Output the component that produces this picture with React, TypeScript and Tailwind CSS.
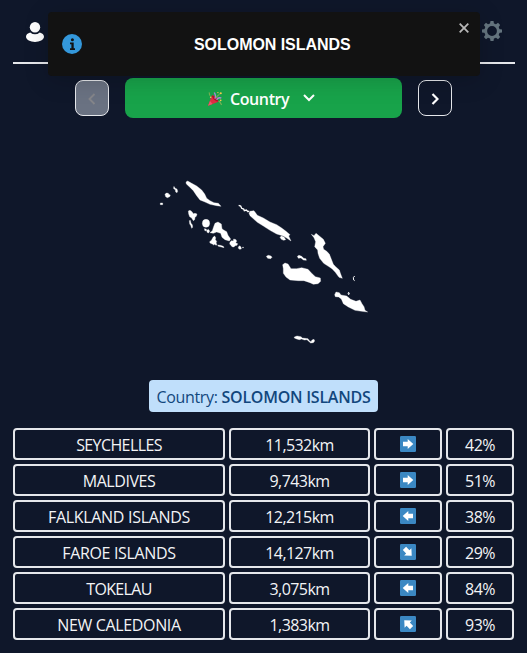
import React from "react";

type Direction = "right" | "left" | "downRight" | "upLeft";

interface Guess {
  name: string;
  distance: string;
  direction: Direction;
  proximity: string;
  spacing: string;
}

const guesses: Guess[] = [
  { name: "SEYCHELLES", distance: "11,532km", direction: "right", proximity: "42%", spacing: "tracking-[-0.6px]" },
  { name: "MALDIVES", distance: "9,743km", direction: "right", proximity: "51%", spacing: "tracking-[-0.45px]" },
  { name: "FALKLAND ISLANDS", distance: "12,215km", direction: "left", proximity: "38%", spacing: "tracking-[-0.3px]" },
  { name: "FAROE ISLANDS", distance: "14,127km", direction: "downRight", proximity: "29%", spacing: "tracking-[-0.33px]" },
  { name: "TOKELAU", distance: "3,075km", direction: "left", proximity: "84%", spacing: "tracking-[-0.65px]" },
  { name: "NEW CALEDONIA", distance: "1,383km", direction: "upLeft", proximity: "93%", spacing: "tracking-[-0.35px]" },
];

const angles: Record<Direction, number> = { right: 0, left: 180, downRight: 45, upLeft: 225 };

function ArrowTile({ direction }: { direction: Direction }) {
  return (
    <svg width="16" height="16" viewBox="0 0 16 16">
      <rect width="16" height="16" rx="1.2" fill="#3b88c3" />
      <path
        d="M3 5.7h4.7V2.9L13.3 8l-5.6 5.1v-2.8H3z"
        fill="#fff"
        transform={`rotate(${angles[direction]} 8 8)`}
      />
    </svg>
  );
}

function UserIcon() {
  return (
    <svg width="18" height="20" viewBox="0 0 18 20" fill="#fff" className="relative top-px">
      <circle cx="9" cy="5.2" r="5.2" />
      <path d="M4.2 10.4C1.7 11 0 12.6 0 14.8c0 3.1 4.5 5.2 9 5.2s9-2.1 9-5.2c0-2.2-1.7-3.8-4.2-4.4a7.7 7.7 0 0 1-9.6 0z" />
    </svg>
  );
}

function GearIcon() {
  const teeth = [0, 45, 90, 135, 180, 225, 270, 315];
  return (
    <svg width="20" height="20" viewBox="0 0 20 20">
      <circle cx="10" cy="10" r="6.3" fill="none" stroke="#65757f" strokeWidth="2.8" />
      {teeth.map((a) => (
        <path key={a} d="M7.9 3.6 8.5 0h3l.6 3.6z" fill="#65757f" transform={`rotate(${a} 10 10)`} />
      ))}
    </svg>
  );
}

function InfoIcon() {
  return (
    <svg width="20" height="20" viewBox="0 0 20 20">
      <circle cx="10" cy="10" r="10" fill="#3498db" />
      <circle cx="10.4" cy="5.8" r="1.5" fill="#121212" />
      <path d="M8 8.5h3.7v5.7H13V16H8v-1.8h1.4v-3.9H8z" fill="#121212" />
    </svg>
  );
}

function PartyPopper() {
  return (
    <svg width="16" height="16" viewBox="0 0 16 16" className="relative top-px">
      <path d="M1 14.7 5 4.3c2.8.6 5.8 3.6 6.6 6.5z" fill="#dd2e44" />
      <path d="m1 14.7 2-4.7 2.5 3z" fill="#ea596e" />
      <path d="M5 4.3c3 1 5.6 3.4 6.6 6.5-2.4 0-7-3.4-6.6-6.5z" fill="#b5122a" />
      <path d="M7.8 7.6c1.7-2 .4-4.5-.5-6.1M9.6 8.7c1-2 3-2.3 4.7-1.7" fill="none" stroke="#aa8dd8" strokeWidth="1.4" />
      <path d="M1.8 1.5c1.6.5-.4 2.5 1.4 3M11.5 10.3c2.3-.3 1.4 2.5 3.3 3.4" fill="none" stroke="#77b255" strokeWidth="1.2" />
      <path d="M9.2 7C9 4.5 12.6 5.1 12.4 2.4" fill="none" stroke="#77b255" strokeWidth="1.1" />
      <circle cx="13.8" cy="2.3" r="1" fill="#ffcc4d" />
      <circle cx="10.9" cy="1.6" r=".7" fill="#ffcc4d" />
      <circle cx="3.7" cy="6.2" r=".8" fill="#ffcc4d" />
      <circle cx="13.7" cy="9.4" r=".8" fill="#ffcc4d" />
    </svg>
  );
}

function Islands() {
  return (
    <svg width="220" height="180" viewBox="155 170 220 180" fill="#fff" stroke="#fff" strokeWidth="1" className="block">
      <g transform="translate(150 170) scale(.33333)">
        <path d="M108 36L113 33 125 40 140 48 155 60 164 72 170 85 180 92 192 98 205 100 213 109 200 107 180 103 165 96 150 90 140 77 130 62 118 50 109 42z" />
        <path d="M45 73l4-4 6 1 1 3 5 2-2 5-7 3-5-3zM71 50h2l2 5 6 2 2 7-2 4-4-2-1-7-5-3zM31 99h7v5h-7z" />
        <path d="M115 123l5-2 6 4 4 6 5-1 6 2-2 7-4 3-1 7-4 3-5-8-6-4-3-8zM118 152l3-1 2 9 4 4 1 8-3 3-3-9-3-4z" />
        <ellipse cx="168" cy="160" rx="11" ry="12" />
        <path d="M163 176l5 1 3 4 4-3 4 5-3 6-5-2-1-6-5 2zM180 188L187 182 191 170 195 160 204 156 214 162 216 176 221 180 230 185 234 196 242 207 238 213 225 209 216 202 212 190 200 186 190 190z" />
        <path d="M189 202l5-4 3 5-1 6 4 5-2 6 3 2-2 4-6-3-2 2-4-3-7-3-1-4 6-5zM203 225l8 1 9 3 2 4-8-2-9-2zM240 217l4-5 6 1 1-6 7 2 2 5-3 4 6 3-2 5-6 1-3 4-6-1-4-5-3-3zM265 231l4-4 4 4 1 6-5 1-4-3zM278 231h2v3h-2z" />
      </g>
      <g transform="translate(230 190) scale(.33333)">
        <path d="M26 46l6 2 3 7 6 2 2 5 6-2 5 5 4-2" fill="none" strokeWidth="4" />
        <path d="M60 64L72 62 82 76 100 84 120 96 140 104 155 114 168 124 180 134 176 138 183 153 170 144 160 138 140 132 120 121 100 108 82 97 72 88 60 77 57 70z" />
        <path d="M150 142l4-4 8 3 5 8-6 2-7-3zM109 199l6-3 8 2 3 4-4 4-9-1zM202 199l5-3 8 3 6 6 7 1 1 5-9-1-7-6-8 1z" />
        <path d="M158 224L165 219 174 222 183 236 200 236 215 233 234 238 245 250 256 260 271 264 272 274 264 281 250 283 240 278 222 272 205 272 180 270 168 261 160 250 160 236z" />
        <path d="M244 133L252 137 258 130 268 138 280 148 286 160 279 170 281 178 290 184 298 192 303 205 310 223 317 230 328 240 332 252 337 265 327 262 316 247 306 236 295 229 281 220 269 205 264 190 263 180 254 170 257 155 252 143z" />
        <path d="M374 258l-4 5 1 7 3 2M354 309l2-2 2 4-2 3z" fill="none" strokeWidth="3" />
        <path d="M314 314L318 306 328 308 333 315 350 318 362 328 378 334 390 330 396 341 402 350 405 361 413 366 395 364 375 361 355 351 340 341 334 327 326 321 316 320z" />
        <path d="M193 441l8-3 12 2 4 4 8 1 9 1 5 7 4 2 3-5 6-2 2 5-4 5-8 1-7-6-4-4-8 1-8-3-7 2-8-2-7-3z" />
      </g>
    </svg>
  );
}

const cell =
  "flex h-8 items-center justify-center rounded border-2 border-gray-200 text-[16px] leading-6 whitespace-nowrap";

export default function App() {
  return (
    <div className="relative h-[653px] w-[527px] overflow-hidden bg-[#0f172a] font-['Segoe_UI','Open_Sans',sans-serif] text-[#f3f4f6]">
      <header className="mr-3 ml-[13px] flex h-16 items-center justify-between border-b-2 border-gray-200 pr-[13px] pl-[13px]">
        <UserIcon />
        <GearIcon />
      </header>

      <div className="mt-[14px] flex h-10 items-center gap-4 pl-[75px]">
        <button className="flex h-9 w-[34px] items-center justify-center rounded-lg border border-gray-200 bg-gray-500">
          <svg width="8" height="12" viewBox="0 0 8 12" fill="none" stroke="#85868a" strokeWidth="1.8" className="relative top-px">
            <path d="m6.5 1-5 5 5 5" />
          </svg>
        </button>
        <button className="flex h-10 w-[277px] items-center rounded-lg bg-[#18a34a] pl-[82px] font-semibold text-white">
          <PartyPopper />
          <span className="ml-[7px] w-[59px] pt-[2px] text-left text-[16px] leading-6 tracking-[-0.4px]">Country</span>
          <svg width="12" height="8" viewBox="0 0 12 8" fill="none" stroke="#fff" strokeWidth="2" className="ml-[14px]">
            <path d="m1 1 5 5 5-5" />
          </svg>
        </button>
        <button className="flex h-9 w-[34px] items-center justify-center rounded-lg border border-gray-200">
          <svg width="8" height="12" viewBox="0 0 8 12" fill="none" stroke="#fff" strokeWidth="2.2" className="relative top-px">
            <path d="m1.5 1 5 5-5 5" />
          </svg>
        </button>
      </div>

      <main>
        <div className="mt-[52px] ml-[155px] h-[210px]">
          <Islands />
        </div>
        <div className="ml-[149px] flex h-8 w-[229px] items-center justify-center gap-1 rounded bg-[#c0dffb] pt-[2px] text-[16px] leading-6 whitespace-nowrap text-[#12477d]">
          <span className="tracking-[-0.35px]">Country:</span>
          <span className="font-semibold tracking-[-0.25px]">SOLOMON ISLANDS</span>
        </div>
        <div className="mt-4 ml-[13px] grid w-[501px] grid-cols-[212px_141px_68px_68px] gap-1">
          {guesses.map((g) => (
            <React.Fragment key={g.name}>
              <div className={`${cell} ${g.spacing} pt-[2px]`}><span>{g.name}</span></div>
              <div className={`${cell} pt-[2px] tracking-[-0.58px]`}><span>{g.distance}</span></div>
              <div className={cell}><ArrowTile direction={g.direction} /></div>
              <div className={`${cell} pt-[2px] tracking-[-0.5px]`}><span>{g.proximity}</span></div>
            </React.Fragment>
          ))}
        </div>
      </main>

      <div className="absolute top-3 left-12 flex h-16 w-[432px] items-center rounded bg-[#121212] pl-[14px] shadow-[0_4px_24px_rgba(0,0,0,0.18)]">
        <InfoIcon />
        <span className="ml-[112px] pt-[2px] font-['Liberation_Sans',Arial,sans-serif] text-[16px] leading-6 font-bold tracking-[-0.05px] text-white">
          SOLOMON ISLANDS
        </span>
        <svg width="10" height="10" viewBox="0 0 10 10" fill="none" stroke="#b8b8b8" strokeWidth="1.8" className="absolute top-[11px] right-[11px]">
          <path d="m.7.7 8.6 8.6M9.3.7.7 9.3" />
        </svg>
      </div>
    </div>
  );
}
